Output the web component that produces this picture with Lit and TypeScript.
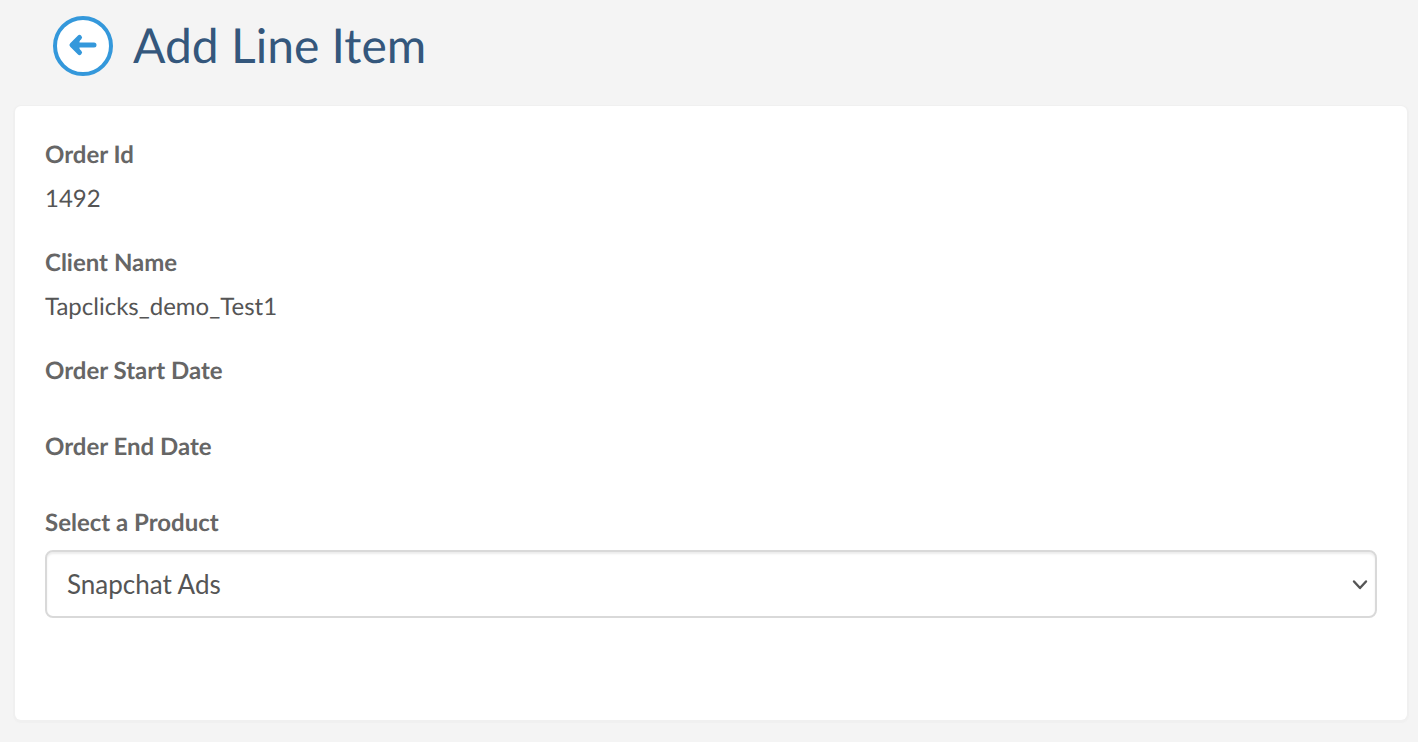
import { LitElement, html, css } from "lit";
import { customElement, state } from "lit/decorators.js";

interface OrderField {
  label: string;
  value: string;
}

@customElement("app-root")
export class AppRoot extends LitElement {
  static styles = css`
    :host {
      display: block;
      box-sizing: border-box;
      min-height: 100vh;
      padding: 16px 11px 22px 15px;
      background: #f4f4f4;
      color: #555;
      font-family: Lato, "Open Sans", sans-serif;
      font-size: 24px;
      line-height: 32px;
      text-rendering: geometricPrecision;
    }
    .header {
      display: flex;
      align-items: center;
      gap: 20px;
      padding-left: 38px;
      margin-bottom: 30px;
    }
    .back {
      box-sizing: border-box;
      display: flex;
      width: 60px;
      height: 60px;
      padding: 0;
      border: 4px solid #3498db;
      border-radius: 50%;
      background: #fff;
      color: #3498db;
      cursor: pointer;
    }
    .back svg {
      width: 52px;
      height: 52px;
    }
    .title {
      margin: 0;
      color: #34577c;
      font-size: 48px;
      font-weight: 400;
      line-height: 60px;
    }
    .card {
      padding: 33px 30px 102px;
      border-radius: 6px;
      background: #fff;
      box-shadow: 0 1px 1px 2px #f0f0f0;
    }
    .fields {
      margin: 0;
    }
    .field {
      display: grid;
      gap: 12px;
      margin-bottom: 32px;
    }
    .label {
      color: #666;
      font-weight: 700;
    }
    .value {
      margin: 0;
    }
    .product {
      display: grid;
      gap: 11px;
    }
    .control {
      display: grid;
      align-items: center;
    }
    .control > * {
      grid-area: 1 / 1;
    }
    .select {
      box-sizing: border-box;
      width: 100%;
      height: 68px;
      padding: 0 40px 0 20px;
      border: 2px solid #d9d9d9;
      border-radius: 8px;
      background: #fff;
      box-shadow: inset 0 2px 2px rgba(0, 0, 0, 0.075);
      color: #555;
      font: inherit;
      font-size: 26px;
      appearance: none;
    }
    .chevron {
      justify-self: end;
      width: 16px;
      height: 12px;
      margin-right: 9px;
      pointer-events: none;
    }
  `;

  @state() private product = "Snapchat Ads";

  private fields: OrderField[] = [
    { label: "Order Id", value: "1492" },
    { label: "Client Name", value: "Tapclicks_demo_Test1" },
    { label: "Order Start Date", value: "" },
    { label: "Order End Date", value: "" },
  ];

  private onProduct(e: Event) {
    this.product = (e.target as HTMLSelectElement).value;
  }

  render() {
    return html`
      <header class="header">
        <button class="back" type="button" aria-label="Back">
          <svg viewBox="0 0 52 52" fill="none" stroke="currentColor" stroke-width="5" stroke-linecap="round" stroke-linejoin="round" aria-hidden="true">
            <path d="M22.500 17.500 15 25l7.500 7.500M15.500 25H37" />
            <path d="M22 20v10l-5-5z" fill="currentColor" stroke-width="1" />
          </svg>
        </button>
        <h1 class="title">Add Line Item</h1>
      </header>
      <main class="card">
        <dl class="fields">
          ${this.fields.map(
            (f) => html`
              <div class="field">
                <dt class="label">${f.label}</dt>
                <dd class="value">${f.value}</dd>
              </div>
            `
          )}
        </dl>
        <div class="product">
          <label class="label" for="product">Select a Product</label>
          <div class="control">
            <select class="select" id="product" .value=${this.product} @change=${this.onProduct}>
              <option>Snapchat Ads</option>
            </select>
            <svg class="chevron" viewBox="0 0 16 12" fill="none" stroke="#555" stroke-width="2.400" stroke-linecap="round" stroke-linejoin="round" aria-hidden="true">
              <path d="M2 3.500l6 6.500L14 3.500" />
            </svg>
          </div>
        </div>
      </main>
    `;
  }
}
